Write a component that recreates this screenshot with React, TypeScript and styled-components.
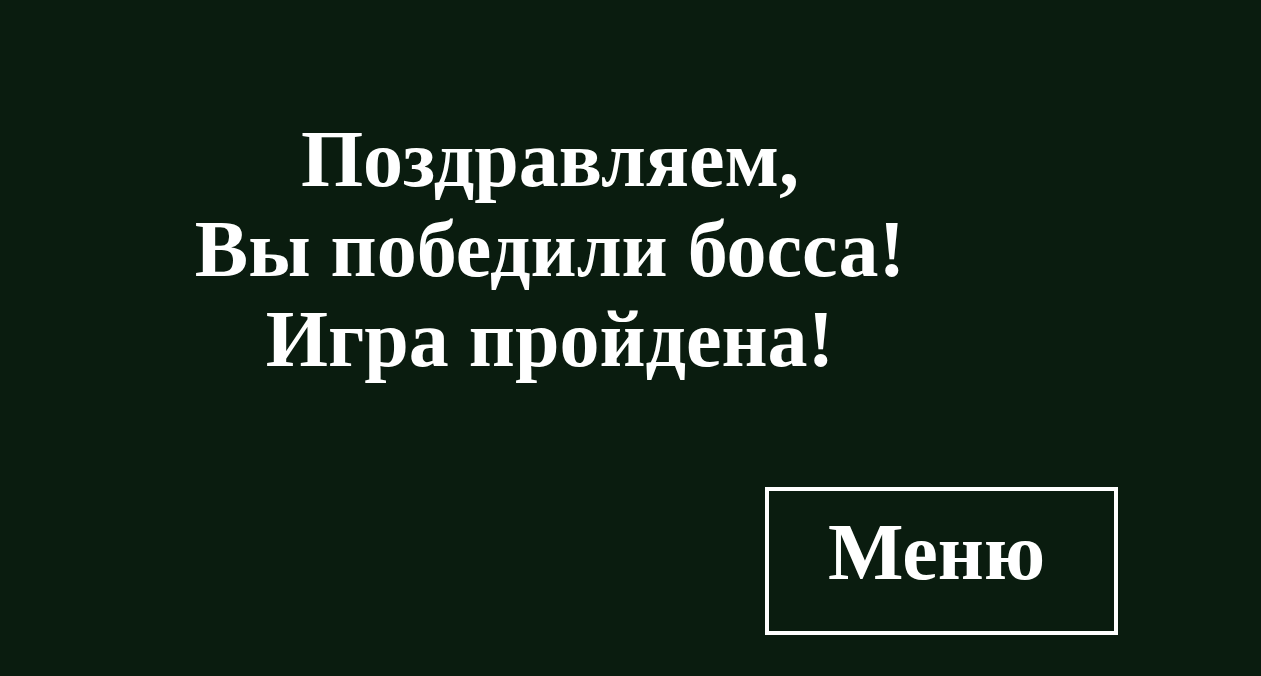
import React from "react";
import styled, { createGlobalStyle } from "styled-components";

const Global = createGlobalStyle`
  html, body { margin: 0; padding: 0; background: #0a1c0f; }
  body { font-family: "Liberation Serif", "Times New Roman", serif; }
`;

const Screen = styled.main`
  width: 1261px;
  height: 676px;
  background: #0a1c0f;
  display: flex;
  flex-direction: column;
  box-sizing: border-box;
  padding-top: 114px;
`;

const Title = styled.h1`
  margin: 0;
  width: 1100px;
  text-align: center;
  color: #ffffff;
  font-family: "Liberation Serif", "Times New Roman", serif;
  font-weight: 700;
  font-size: 80px;
  line-height: 90px;
`;

const Footer = styled.div`
  display: flex;
  justify-content: flex-end;
  padding-right: 143px;
  margin-top: 103px;
`;

const MenuButton = styled.button`
  width: 353px;
  height: 148px;
  box-sizing: border-box;
  border: 4px solid #ffffff;
  background: transparent;
  color: #ffffff;
  font-family: "Liberation Serif", "Times New Roman", serif;
  font-weight: 700;
  font-size: 80px;
  padding: 0 10px 18px 0;
  cursor: pointer;
`;

export default function App() {
  return (
    <>
      <Global />
      <Screen>
        <Title>
          Поздравляем,
          <br />
          Вы победили босса!
          <br />
          Игра пройдена!
        </Title>
        <Footer>
          <MenuButton>Меню</MenuButton>
        </Footer>
      </Screen>
    </>
  );
}
